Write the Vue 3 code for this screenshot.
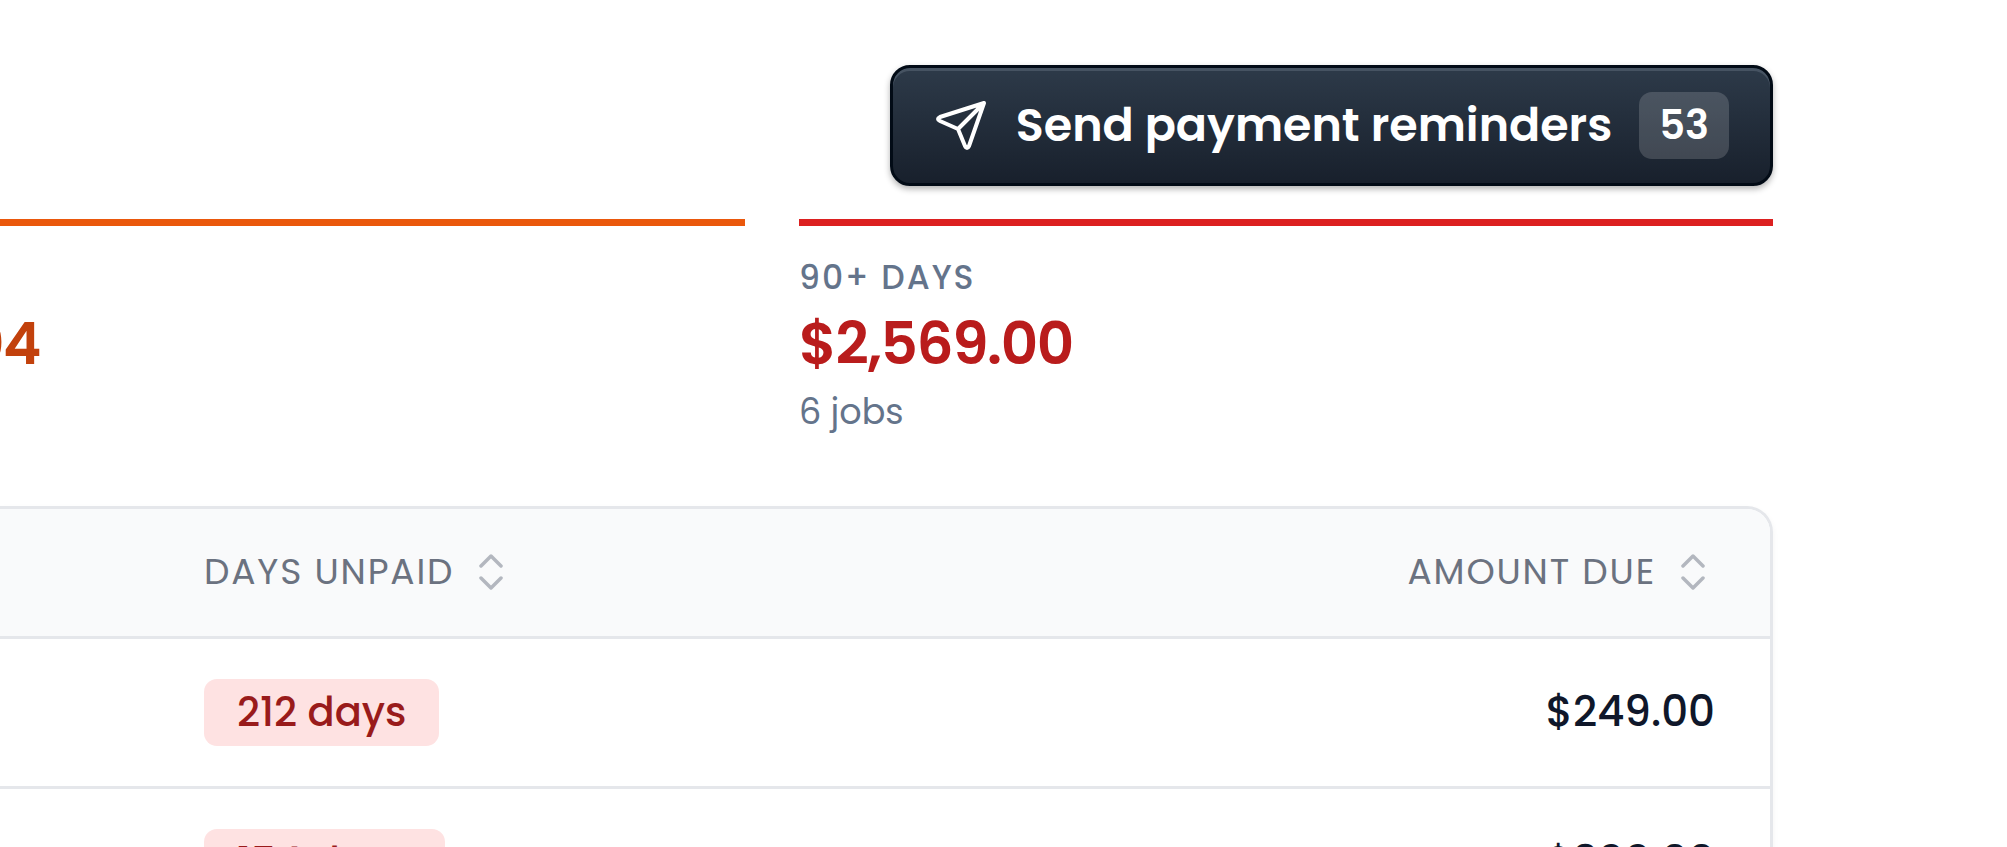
<script setup>
const columns = ['DAYS UNPAID', 'AMOUNT DUE']
const rows = [
  { days: '212 days', amount: '$249.00' },
  { days: '154 days', amount: '$399.00' },
]
</script>

<template>
  <main class="page">
    <header class="actions">
      <button class="send" type="button">
        <svg class="plane" viewBox="0 0 52 52" fill="none" stroke="currentColor" stroke-width="4" stroke-linecap="round" stroke-linejoin="round" aria-hidden="true">
          <path d="M48 4 33 47Q31 51 29 47L22 30 4 22Q0 20 4 18ZM48 4 22 30" />
        </svg>
        <span>Send payment reminders</span>
        <span class="count">53</span>
      </button>
    </header>

    <section class="buckets">
      <article class="bucket orange">
        <div class="cents">04</div>
      </article>
      <article class="bucket red">
        <h2 class="label">90+ DAYS</h2>
        <p class="amount">$2,569.00</p>
        <p class="jobs">6 jobs</p>
      </article>
    </section>

    <div class="panel">
      <table>
        <thead>
          <tr>
            <th v-for="name in columns" :key="name" scope="col">
              <button class="sort" type="button">
                {{ name }}
                <svg viewBox="0 0 24 36" fill="none" stroke="currentColor" stroke-width="3.5" stroke-linecap="round" stroke-linejoin="round" aria-hidden="true">
                  <path d="M2 12 12 2 22 12M2 24 12 34 22 24" />
                </svg>
              </button>
            </th>
          </tr>
        </thead>
        <tbody>
          <tr v-for="row in rows" :key="row.days">
            <td><span class="badge">{{ row.days }}</span></td>
            <td>{{ row.amount }}</td>
          </tr>
        </tbody>
      </table>
    </div>
  </main>
</template>

<style>
body {
  background: #fff;
  overflow: hidden;
}
</style>

<style scoped>
.page {
  box-sizing: border-box;
  height: 100vh;
  overflow: hidden;
  padding: 65px 234px 0 0;
  font-family: Poppins, Inter, "Liberation Sans", sans-serif;
}

.actions {
  display: flex;
  justify-content: flex-end;
}

.send {
  display: flex;
  align-items: center;
  height: 121px;
  padding: 0 41px 0 43px;
  border: 3px solid #020b16;
  border-radius: 20px;
  background: linear-gradient(#2d3a49, #18202c);
  box-shadow: inset 0 3px 0 #465362, 0 3px 6px rgb(0 0 0 / 30%);
  color: #fff;
  font: 600 46px/64px Poppins, Inter, sans-serif;
}

.send > span {
  margin-bottom: 2px;
}

.plane {
  width: 52px;
  height: 52px;
  margin: 0 28px 2px 0;
}

.send .count {
  margin: 0 0 0 27px;
  padding: 0 20px;
  border-radius: 13px;
  background: rgb(255 255 255 / 16%);
  font-size: 40px;
  line-height: 67px;
}

.buckets {
  display: grid;
  grid-template-columns: 745fr 974fr;
  column-gap: 54px;
  margin-top: 33px;
}

.bucket {
  border-top: 7px solid #dc2020;
  height: 280px;
}

.orange {
  border-color: #ea580c;
}

.label,
.amount,
.jobs {
  margin: 0;
}

.label {
  padding-top: 28px;
  color: #64748b;
  font-size: 33px;
  font-weight: 500;
  line-height: 48px;
  letter-spacing: 2px;
}

.amount,
.cents {
  font-size: 58px;
  font-weight: 600;
  line-height: 84px;
  letter-spacing: -0.025em;
}

.amount {
  color: #b91c1c;
}

.cents {
  display: flex;
  justify-content: flex-end;
  width: 40px;
  margin-top: 76px;
  overflow: hidden;
  color: #c2410c;
}

.jobs {
  color: #64748b;
  font-size: 35px;
  line-height: 52px;
}

.panel {
  overflow: hidden;
  border: 3px solid #e5e7eb;
  border-left: 0;
  border-radius: 0 26px 0 0;
  box-shadow: 0 3px 6px rgb(0 0 0 / 5%);
}

table {
  width: 100%;
  border-collapse: separate;
  border-spacing: 0;
}

th,
td {
  box-sizing: border-box;
  padding: 0 55px 0 204px;
  border-bottom: 3px solid #e5e7eb;
  text-align: left;
}

th:last-child,
td:last-child {
  text-align: right;
}

th {
  height: 130px;
  padding-bottom: 2px;
  background: #f9fafb;
}

td {
  height: 150px;
  color: #0f172a;
  font-size: 42px;
  font-weight: 500;
}

td:last-child {
  padding-bottom: 2px;
}

.sort {
  display: inline-flex;
  align-items: center;
  gap: 25px;
  padding: 0;
  border: 0;
  background: none;
  color: #6b7280;
  font: 400 36px/48px Poppins, Inter, sans-serif;
  letter-spacing: 0.05em;
}

th:last-child .sort {
  padding-right: 10px;
}

.sort svg {
  width: 24px;
  height: 36px;
  color: #b3b7bf;
}

.badge {
  display: inline-block;
  padding: 0 33px;
  border-radius: 13px;
  background: #fee2e2;
  color: #991b1b;
  font-size: 40px;
  font-weight: 500;
  line-height: 67px;
}
</style>
